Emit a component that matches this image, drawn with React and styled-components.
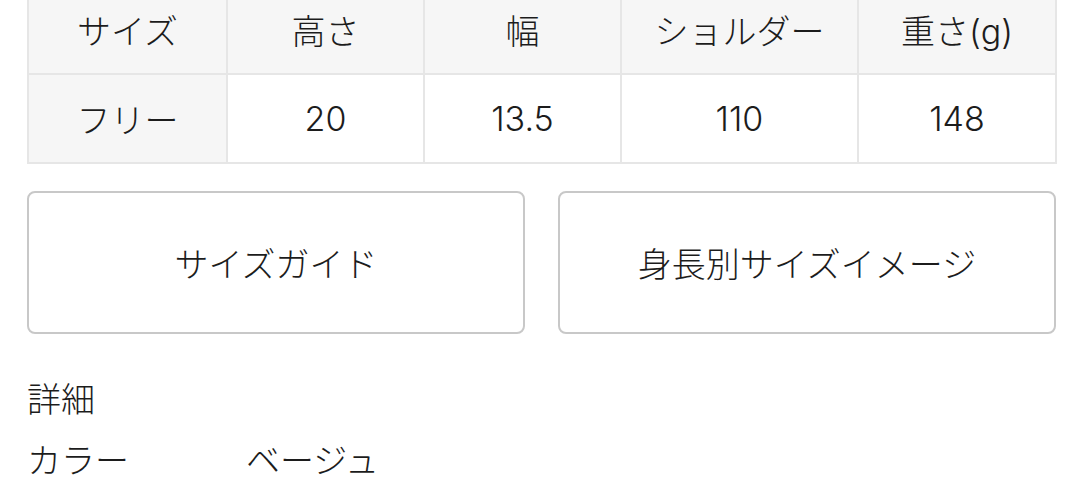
import React from "react";
import styled, { createGlobalStyle } from "styled-components";

const sizeHeaders = ["サイズ", "高さ", "幅", "ショルダー", "重さ(g)"];
const sizeRows = [["フリー", "20", "13.5", "110", "148"]];
const colWidths = [199, 197, 197, 237, 198];

const fontStack = `Inter, "Noto Sans CJK JP", "Noto Sans", sans-serif`;

function App() {
  return (
    <>
      <GlobalStyle />
      <Page>
        <SizeTable>
          <colgroup>
            {colWidths.map((w, i) => (
              <col key={i} style={{ width: w }} />
            ))}
          </colgroup>
          <thead>
            <tr>
              {sizeHeaders.map((h) => (
                <HeadCell key={h}>{h}</HeadCell>
              ))}
            </tr>
          </thead>
          <tbody>
            {sizeRows.map((row) => (
              <tr key={row[0]}>
                {row.map((cell, i) => (
                  <BodyCell key={i} shaded={i === 0}>
                    {cell}
                  </BodyCell>
                ))}
              </tr>
            ))}
          </tbody>
        </SizeTable>

        <ButtonRow>
          <GuideButton>サイズガイド</GuideButton>
          <GuideButton>身長別サイズイメージ</GuideButton>
        </ButtonRow>

        <Details>
          <DetailTitle>詳細</DetailTitle>
          <DetailRow>
            <DetailLabel>カラー</DetailLabel>
            <DetailValue>ベージュ</DetailValue>
          </DetailRow>
        </Details>
      </Page>
    </>
  );
}

const GlobalStyle = createGlobalStyle`
  html, body {
    margin: 0;
    padding: 0;
    background: #ffffff;
  }
  body {
    font-family: ${fontStack};
    color: #1c1c1c;
    overflow: hidden;
  }
`;

const Page = styled.div`
  width: 1080px;
  height: 489px;
  padding-left: 27px;
  box-sizing: border-box;
  overflow: hidden;
`;

const SizeTable = styled.table`
  width: 1028px;
  margin-top: -16px;
  border-collapse: collapse;
  table-layout: fixed;
  border: 2px solid #e6e6e6;
`;

const HeadCell = styled.th`
  height: 87px;
  padding: 0;
  border: 2px solid #e6e6e6;
  background: #f6f6f6;
  font-size: 34px;
  font-weight: 300;
  text-align: center;
  vertical-align: middle;
`;

const BodyCell = styled.td`
  height: 87px;
  padding: 0;
  border: 2px solid #e6e6e6;
  background: ${(props) => (props.shaded ? "#f6f6f6" : "#ffffff")};
  font-size: 34px;
  font-weight: 300;
  text-align: center;
  vertical-align: middle;
`;

const ButtonRow = styled.div`
  display: grid;
  grid-template-columns: 1fr 1fr;
  gap: 33px;
  width: 1029px;
  margin-top: 27px;
`;

const GuideButton = styled.button`
  height: 143px;
  border: 2px solid #c8c8c8;
  border-radius: 8px;
  background: #ffffff;
  font-family: ${fontStack};
  font-size: 34px;
  font-weight: 300;
  color: #1c1c1c;
  cursor: pointer;
`;

const Details = styled.div`
  margin-top: 35px;
  font-size: 34px;
  font-weight: 300;
  line-height: 61px;
`;

const DetailTitle = styled.div``;

const DetailRow = styled.div`
  display: flex;
`;

const DetailLabel = styled.div`
  width: 219px;
`;

const DetailValue = styled.div``;

export default App;
